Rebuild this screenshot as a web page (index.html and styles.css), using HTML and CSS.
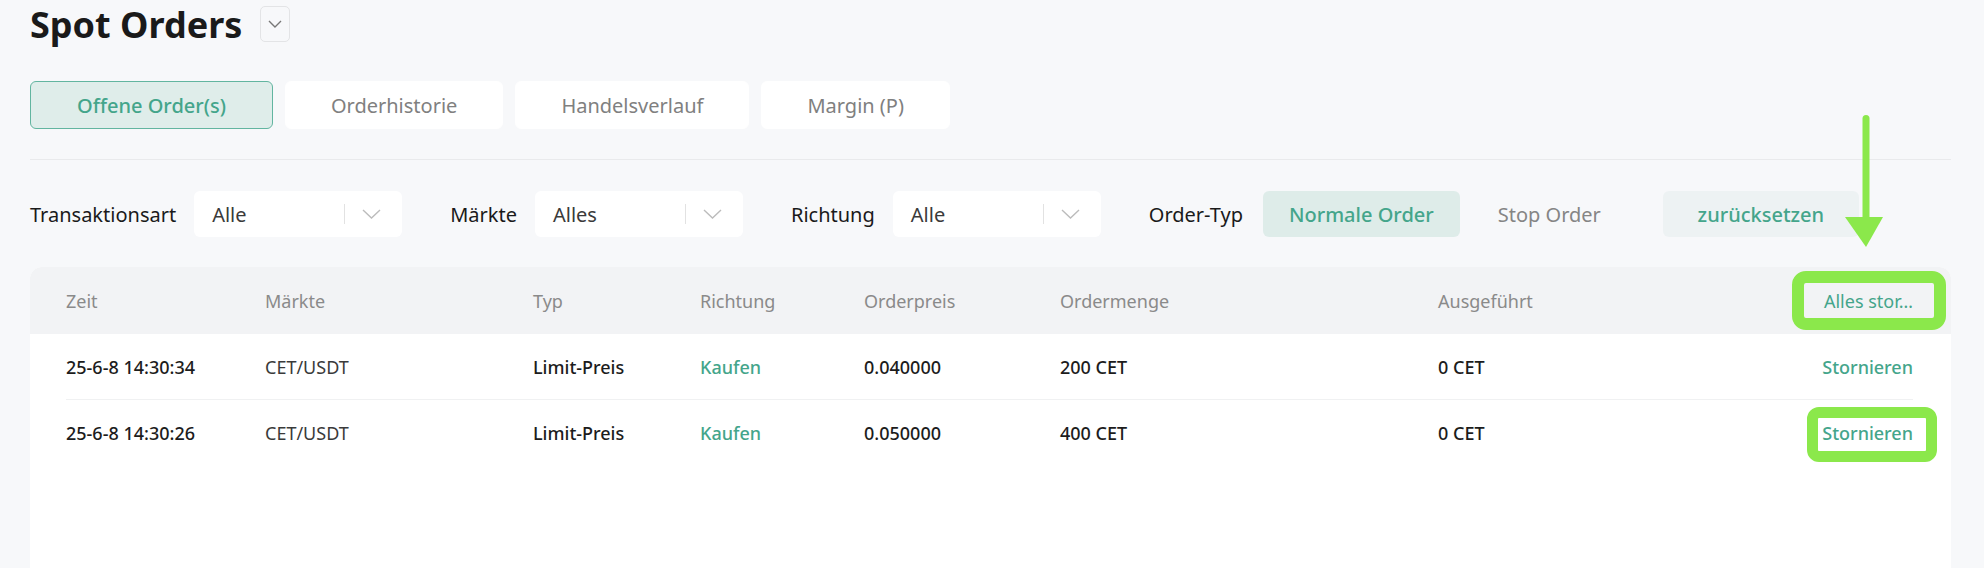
FILE: index.html
```html
<!DOCTYPE html>
<html lang="de">
<head>
    <meta charset="UTF-8">
    <meta name="viewport" content="width=device-width, initial-scale=1.0">
    <title>Spot Orders</title>
    <link rel="stylesheet" href="styles.css">
</head>
<body>
    <header class="page-head">
        <h1>Spot Orders</h1>
        <button class="head-toggle"><svg width="14" height="8" viewBox="0 0 14 8"><polyline points="1,1 7,7 13,1" fill="none" stroke="#777" stroke-width="1.4"/></svg></button>
    </header>

    <nav class="tabs">
        <button class="tab active">Offene Order(s)</button>
        <button class="tab">Orderhistorie</button>
        <button class="tab">Handelsverlauf</button>
        <button class="tab">Margin (P)</button>
    </nav>

    <hr class="rule">

    <div class="filters">
        <div class="field">
            <span class="label">Transaktionsart</span>
            <div class="select"><span class="value">Alle</span><i class="sep"></i><svg class="chev" width="19" height="10" viewBox="0 0 19 10"><polyline points="1,1 9.5,9 18,1" fill="none" stroke="#bcbcbc" stroke-width="1.4"/></svg></div>
        </div>
        <div class="field">
            <span class="label">Märkte</span>
            <div class="select"><span class="value">Alles</span><i class="sep"></i><svg class="chev" width="19" height="10" viewBox="0 0 19 10"><polyline points="1,1 9.5,9 18,1" fill="none" stroke="#bcbcbc" stroke-width="1.4"/></svg></div>
        </div>
        <div class="field">
            <span class="label">Richtung</span>
            <div class="select"><span class="value">Alle</span><i class="sep"></i><svg class="chev" width="19" height="10" viewBox="0 0 19 10"><polyline points="1,1 9.5,9 18,1" fill="none" stroke="#bcbcbc" stroke-width="1.4"/></svg></div>
        </div>
        <div class="field type">
            <span class="label">Order-Typ</span>
            <div class="seg">
                <button class="seg-btn on">Normale Order</button>
                <button class="seg-btn">Stop Order</button>
            </div>
            <button class="reset">zurücksetzen</button>
        </div>
    </div>

    <div class="card">
        <div class="row thead">
            <span>Zeit</span>
            <span>Märkte</span>
            <span>Typ</span>
            <span>Richtung</span>
            <span>Orderpreis</span>
            <span>Ordermenge</span>
            <span>Ausgeführt</span>
            <span class="act"><span class="cancel-all" title="Alles stornieren">Alles stor…</span></span>
        </div>
        <div class="tbody">
            <div class="row">
                <span>25-6-8 14:30:34</span>
                <span class="market">CET/USDT</span>
                <span>Limit-Preis</span>
                <span class="buy">Kaufen</span>
                <span>0.040000</span>
                <span>200 CET</span>
                <span>0 CET</span>
                <span class="act cancel">Stornieren</span>
            </div>
            <div class="row">
                <span>25-6-8 14:30:26</span>
                <span class="market">CET/USDT</span>
                <span>Limit-Preis</span>
                <span class="buy">Kaufen</span>
                <span>0.050000</span>
                <span>400 CET</span>
                <span>0 CET</span>
                <span class="act cancel">Stornieren</span>
            </div>
        </div>
    </div>

    <!-- annotations drawn on top of the screenshot -->
    <div class="notes">
        <svg class="arrow" width="48" height="140" viewBox="0 0 48 140"><rect x="22.5" y="3" width="7" height="110" rx="3.5" fill="#8be84b"/><polygon points="5,105 43,105 26,135" fill="#8be84b"/></svg>
        <div class="mark mark-all"></div>
        <div class="mark mark-row"></div>
    </div>
</body>
</html>
```

FILE: styles.css
```css
* { box-sizing: border-box; }
body { margin: 0; padding: 0 33px 0 30px; background: #f7f8fa; font-family: "Noto Sans", "Liberation Sans", sans-serif; color: #1a1a1a; position: relative; }
button { font-family: inherit; border: none; cursor: pointer; }

.page-head { display: flex; align-items: flex-start; gap: 18px; }
.page-head h1 { margin: 0; font-size: 36px; line-height: 49px; font-weight: 700; color: #1a1a1a; }
.head-toggle { margin-top: 6px; width: 30px; height: 36px; border: 1px solid #e3e4e6; border-radius: 5px; background: #f7f8fa; display: flex; align-items: center; justify-content: center; padding: 0; }

.tabs { display: flex; gap: 12px; margin-top: 32px; }
.tab { height: 48px; padding: 0 45px; background: #fff; border: 1px solid #fff; border-radius: 6px; font-size: 20px; color: #808080; }
.tab.active { background: #dfedea; border-color: #62b5a0; color: #44a58b; font-weight: 500; padding: 0 46px; }

.rule { margin: 30px 0 31px; border: none; border-top: 1px solid #e9eaec; }

.filters { display: flex; align-items: center; gap: 48px; height: 46px; }
.field { display: flex; align-items: center; gap: 18px; }
.field.type { gap: 20px; }
.label { font-size: 20px; color: #1a1a1a; white-space: nowrap; }
.select { width: 208px; height: 46px; background: #fff; border-radius: 6px; display: flex; align-items: center; padding: 0 21px 0 18px; }
.select .value { flex: 1; font-size: 20px; color: #3a3a3a; }
.select .sep { width: 1px; height: 20px; background: #e2e2e2; }
.select .chev { margin-left: 17px; }

.seg { display: flex; gap: 12px; }
.seg-btn { height: 46px; padding: 0 26px; border-radius: 6px; background: transparent; font-size: 20px; color: #858585; }
.seg-btn.on { background: #deece9; color: #44a58b; font-weight: 500; }
.reset { width: 196px; height: 46px; border-radius: 6px; background: #edf2f3; font-size: 20px; color: #44a58b; font-weight: 500; }
.seg + .reset { margin-left: 16px; }

.card { margin-top: 30px; background: #fff; border-radius: 12px 12px 0 0; min-height: 301px; }
.row { display: grid; grid-template-columns: 199px 268px 167px 164px 196px 378px 1fr auto; align-items: center; font-size: 18px; }
.thead { height: 67px; padding: 0 38px 0 36px; background: #f2f3f5; border-radius: 12px 12px 0 0; color: #8a8a8a; }
.tbody { padding: 0 38px 0 36px; }
.tbody .row { height: 66px; border-bottom: 1px solid #f0f1f2; font-weight: 500; color: #1c1c1c; }
.tbody .row:last-child { border-bottom: none; }
.tbody .market { font-weight: 400; color: #3a3a3a; }
.buy { color: #44a58b; }
.act { text-align: right; }
.cancel { color: #44a58b; }
.cancel-all { white-space: nowrap; color: #44a58b; }

.notes { position: absolute; left: 0; top: 0; }
.arrow { position: absolute; left: 1840px; top: 112px; }
.mark { position: absolute; border: 12px solid #8be84b; border-radius: 14px; }
.mark-all { left: 1792px; top: 271px; width: 154px; height: 59px; }
.mark-row { left: 1807px; top: 407px; width: 130px; height: 55px; border-width: 11px; border-radius: 12px; }
```
